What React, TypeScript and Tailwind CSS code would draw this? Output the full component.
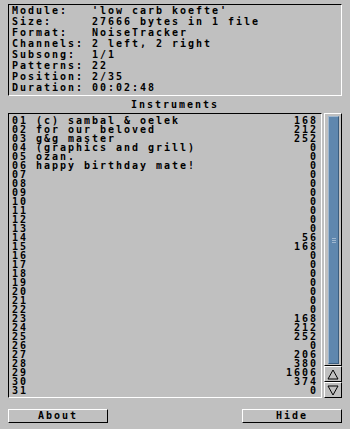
import React from "react";

const info: [string, string][] = [
  ["Module:", "'low carb koefte'"],
  ["Size:", "27666 bytes in 1 file"],
  ["Format:", "NoiseTracker"],
  ["Channels:", "2 left, 2 right"],
  ["Subsong:", "1/1"],
  ["Patterns:", "22"],
  ["Position:", "2/35"],
  ["Duration:", "00:02:48"],
];

const names: Record<number, string> = {
  1: "(c) sambal & oelek",
  2: "for our beloved",
  3: "g&g master",
  4: "(graphics and grill)",
  5: "ozan.",
  6: "happy birthday mate!",
};

const sizes: Record<number, number> = {
  1: 168,
  2: 212,
  3: 252,
  14: 56,
  15: 168,
  23: 168,
  24: 212,
  25: 252,
  27: 206,
  28: 380,
  29: 1606,
  30: 374,
};

const rows = Array.from({ length: 31 }, (_, i) => i + 1);

export default function App() {
  return (
    <div className="w-[350px] h-[429px] bg-[#c0c0c0] text-black font-['DejaVu_Sans_Mono',monospace] font-bold text-[10px] tracking-[1.98px] px-2 pt-1 overflow-hidden">
      {/* info panel */}
      <div className="h-[92px] border border-t-black border-l-black border-r-white border-b-white pl-[3px] flex flex-col">
        {info.map(([k, v]) => (
          <div key={k} className="h-[11px] leading-[11px] whitespace-pre">
            {k.padEnd(10, " ") + v}
          </div>
        ))}
      </div>

      {/* title */}
      <div className="h-[17px] pt-px leading-[16px] text-center whitespace-pre">Instruments</div>

      {/* list + scrollbar */}
      <div className="flex gap-[2px] h-[285px]">
        <div className="w-[314px] h-full border border-t-black border-l-black border-r-white border-b-white pl-[3px] pr-[3px] pt-[2px] flex flex-col">
          {rows.map((n) => (
            <div key={n} className="h-[9px] leading-[9px] flex justify-between whitespace-pre">
              <span>{String(n).padStart(2, "0") + " " + (names[n] ?? "")}</span>
              <span>{String(sizes[n] ?? 0)}</span>
            </div>
          ))}
        </div>

        <div className="w-[18px] h-full flex flex-col">
          <div className="flex-1 border border-t-white border-l-white border-r-black border-b-black pt-[2px] pb-[1px] pl-[3px] pr-[2px] flex">
            <div className="flex-1 bg-[#5f87ae] border border-t-[#9fb7cf] border-l-[#9fb7cf] border-r-[#3b5d7e] border-b-[#3b5d7e] flex items-center justify-center">
              <div className="flex flex-col gap-[1px]">
                <div className="w-[4px] h-[1px] bg-[#9fb7cf]" />
                <div className="w-[4px] h-[1px] bg-[#9fb7cf]" />
                <div className="w-[4px] h-[1px] bg-[#9fb7cf]" />
              </div>
            </div>
          </div>
          <div className="h-[16px] border border-t-white border-l-white border-r-black border-b-black flex items-center justify-center">
            <svg width="12" height="11" viewBox="0 0 12 11">
              <polygon points="6,1 11,10 1,10" fill="none" stroke="#000" strokeWidth="1" />
            </svg>
          </div>
          <div className="h-[16px] border border-t-white border-l-white border-r-black border-b-black flex items-center justify-center">
            <svg width="12" height="11" viewBox="0 0 12 11">
              <polygon points="1,1 11,1 6,10" fill="none" stroke="#000" strokeWidth="1" />
            </svg>
          </div>
        </div>
      </div>

      {/* buttons */}
      <div className="flex justify-between mt-[11px]">
        <div className="w-[100px] h-[14px] border border-t-white border-l-white border-r-black border-b-black leading-[12px] text-center">
          About
        </div>
        <div className="w-[100px] h-[14px] border border-t-white border-l-white border-r-black border-b-black leading-[12px] text-center">
          Hide
        </div>
      </div>
    </div>
  );
}
